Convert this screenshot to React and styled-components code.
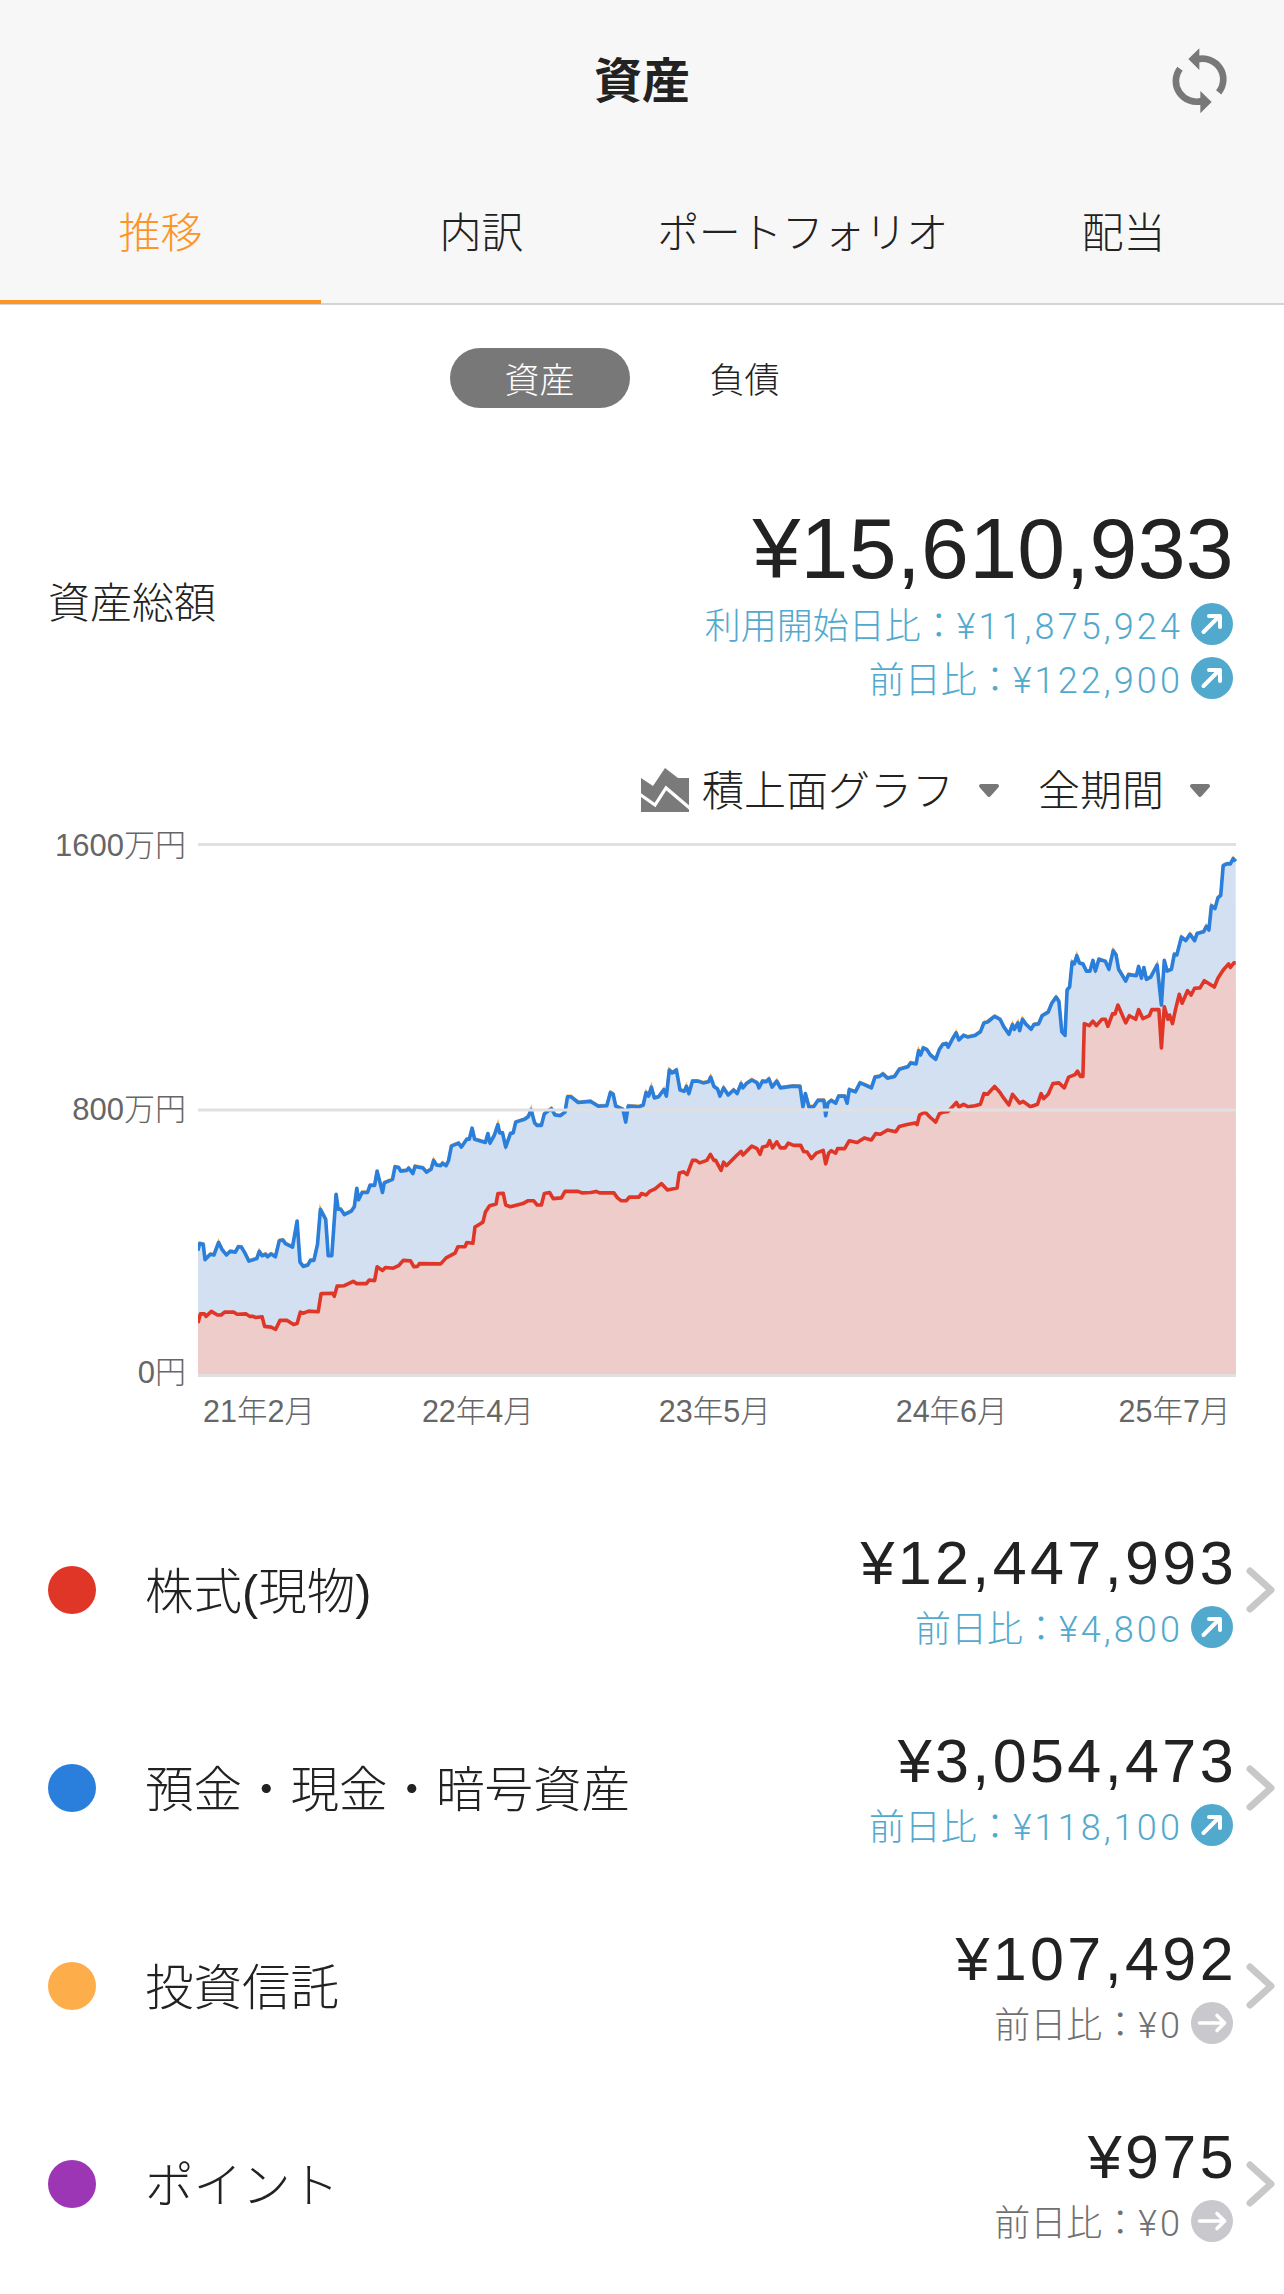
import React from "react";
import styled, { createGlobalStyle } from "styled-components";

const GlobalStyle = createGlobalStyle`
    html, body {
        margin: 0;
        padding: 0;
        background: #fff;
    }
    body {
        font-family: "Liberation Sans", "Noto Sans CJK JP", sans-serif;
        color: #222;
    }
`

const Page = styled.div`
    width: 1284px;
    min-height: 2294px;
    background: #fff;
`
const Header = styled.header`
    background: #f7f7f7;
    border-bottom: 2px solid #d4d4d8;
    height: 303px;
`
const TitleBar = styled.div`
    height: 160px;
    display: grid;
    grid-template-columns: 1fr auto 1fr;
    align-items: center;
`
const Title = styled.h1`
    grid-column: 2;
    margin: 0;
    padding-top: 3px;
    font-size: 48px;
    font-weight: 700;
    line-height: 1;
`
const RefreshIcon = styled.svg`
    grid-column: 3;
    justify-self: end;
    width: 80px;
    height: 90px;
    margin-right: 44px;
`
const Tabs = styled.nav`
    display: grid;
    grid-template-columns: repeat(4, 321px);
    height: 144px;
`
const Tab = styled.div`
    display: flex;
    align-items: center;
    justify-content: center;
    padding-bottom: 2px;
    font-size: 42px;
    font-weight: 300;
    letter-spacing: ${p => (p.$tight ? "-0.5px" : "0")};
    color: ${p => (p.$active ? "#fd9426" : "#222")};
    border-bottom: 4px solid ${p => (p.$active ? "#fd9426" : "transparent")};
    height: 144px;
    box-sizing: border-box;
`
const Toggle = styled.div`
    display: flex;
    justify-content: center;
    gap: 25px;
    margin-top: 43px;
`
const ToggleItem = styled.div`
    width: 180px;
    height: 60px;
    padding-bottom: 1px;
    box-sizing: border-box;
    border-radius: 30px;
    display: flex;
    align-items: center;
    justify-content: center;
    font-size: 35px;
    font-weight: 300;
    background: ${p => (p.$active ? "#787878" : "transparent")};
    color: ${p => (p.$active ? "#fff" : "#222")};
`
const Summary = styled.section`
    display: flex;
    justify-content: space-between;
    align-items: center;
    margin-top: 91px;
    padding: 0 50px 0 48px;
`
const SummaryLabel = styled.div`
    font-size: 42px;
    font-weight: 300;
    padding-bottom: 6px;
`
const Amounts = styled.div`
    display: flex;
    flex-direction: column;
    align-items: flex-end;
`
const TotalValue = styled.div`
    font-size: 86px;
    line-height: 98px;
    height: 98px;
    letter-spacing: 0.3px;
`
const DiffRow = styled.div`
    display: flex;
    align-items: center;
    justify-content: flex-end;
    height: 54px;
    gap: 8px;
    font-size: 36px;
    font-weight: 300;
    color: ${p => (p.$flat ? "#707070" : "#52a9ce")};
`
const DiffText = styled.span`
    padding-bottom: 2px;
`
const DiffMoney = styled.span`
    font-family: Roboto, "Liberation Sans", sans-serif;
    letter-spacing: 3.1px;
`
const DiffIcon = styled.svg`
    width: 42px;
    height: 42px;
    flex: none;
    margin-right: 1px;
`
const Controls = styled.div`
    display: flex;
    align-items: center;
    justify-content: flex-end;
    height: 60px;
    margin-top: 55px;
    padding-right: 73px;
    font-size: 42px;
    font-weight: 300;
`
const ControlText = styled.span`
    padding-bottom: 5px;
`
const AreaIcon = styled.svg`
    width: 50px;
    height: 46px;
    margin-right: 11px;
`
const Caret = styled.svg`
    width: 22px;
    height: 15px;
    margin-left: ${p => p.$before}px;
    margin-right: ${p => p.$after || 0}px;
`
const ChartRow = styled.div`
    display: grid;
    grid-template-columns: 186px 1042px;
    column-gap: 12px;
    margin-top: 10px;
    align-items: start;
`
const YAxis = styled.div`
    height: 558px;
    padding-top: 1px;
    box-sizing: border-box;
    display: flex;
    flex-direction: column;
    justify-content: space-between;
    align-items: flex-end;
`
const AxisLabel = styled.span`
    font-size: 31px;
    line-height: 30px;
    font-weight: 300;
    color: #666;
`
const XLabel = styled(AxisLabel)`
    font-size: 30.5px;
    margin-left: ${p => p.$offset}px;
`
const ChartSvg = styled.svg`
    width: 1042px;
    height: 550px;
    display: block;
`
const XAxis = styled.div`
    display: flex;
    height: 30px;
    margin-top: 8px;
`
const AssetList = styled.section`
    margin-top: 65px;
`
const AssetRow = styled.div`
    height: 198px;
    display: flex;
    align-items: center;
    padding-left: 48px;
`
const Dot = styled.span`
    width: 48px;
    height: 48px;
    border-radius: 50%;
    background: ${p => p.$color};
    flex: none;
`
const AssetName = styled.div`
    flex: 1;
    margin-left: 49px;
    padding-bottom: 5px;
    font-size: 48.5px;
    font-weight: 300;
`
const AssetValue = styled.div`
    font-size: 61px;
    line-height: 74px;
    height: 74px;
    letter-spacing: 3.4px;
    margin-right: -3px;
`
const Chevron = styled.svg`
    width: 32px;
    height: 46px;
    margin-left: 11px;
    margin-right: 7px;
    flex: none;
`

const blue3 = [[50,1178],[55,1158],[65,1160],[70,1203],[85,1188],[95,1190],[108,1155],[118,1175],[130,1190],[140,1180],[155,1182],[163,1167],[172,1168],[182,1185],[193,1207],[215,1200],[222,1180],[230,1192],[240,1188],[245,1195],[255,1187],[267,1195],[278,1150],[288,1148],[295,1158],[315,1168],[328,1095],[336,1210],[345,1222],[358,1218],[365,1205],[375,1205],[385,1160],[393,1062],[408,1090],[415,1192],[425,1192],[437,1020],[443,1062],[450,1062],[460,1077],[480,1067],[488,1055],[495,1003],[500,1035],[510,1015],[525,1015],[532,995],[545,995],[552,955],[567,1015],[572,988],[595,978],[602,943],[612,945],[618,955],[635,953],[640,947],[652,962],[658,942],[680,946],[690,958],[703,950],[710,925],[718,938],[730,940],[735,933],[745,940],[752,925],[760,885],[780,877],[788,888],[803,866],[810,866],[818,835],[825,866],[855,875],[862,850],[868,877],[880,855],[890,825],[895,848],[903,848],[912,888],[925,850],[933,848],[940,818],[965,810],[975,803],[983,783],[993,820],[1000,827],[1012,827],[1020,795],[1040,780],[1050,798],[1065,800],[1078,790],[1085,747],[1095,747],[1115,763],[1150,760],[1170,773],[1195,772],[1205,735],[1213,740],[1220,773],[1240,782],[1248,818],[1255,773],[1285,775],[1297,770],[1305,735],[1312,745],[1320,720],[1328,750],[1340,747],[1355,727],[1362,745],[1370,672],[1378,680],[1390,672],[1400,728],[1412,732],[1418,718],[1425,738],[1435,703],[1450,703],[1465,708],[1480,705],[1486,692],[1495,718],[1505,725],[1512,745],[1522,722],[1535,742],[1550,728],[1560,738]]
const blue4 = [[115,710],[120,722],[130,710],[145,700],[160,708],[165,722],[175,703],[185,705],[193,697],[202,720],[215,703],[225,722],[240,720],[260,717],[280,718],[288,775],[295,738],[305,775],[318,775],[330,757],[347,757],[352,800],[358,765],[368,757],[380,765],[388,745],[405,745],[412,765],[418,727],[435,733],[448,708],[460,713],[480,722],[490,692],[503,690],[512,683],[525,695],[545,690],[558,670],[582,663],[590,652],[605,655],[612,618],[618,630],[625,610],[635,615],[645,630],[660,642],[670,615],[680,600],[690,598],[695,608],[708,583],[717,568],[725,588],[738,575],[750,580],[770,575],[785,565],[795,540],[805,538],[812,532],[825,522],[840,530],[850,550],[865,572],[875,545],[880,558],[890,540],[895,562],[903,530],[912,543],[927,558],[935,545],[948,543],[958,520],[975,510],[985,485],[997,468],[1005,480],[1013,565],[1022,575],[1028,448],[1035,440],[1042,370],[1048,375],[1055,352],[1062,372],[1072,375],[1082,395],[1092,395],[1100,365],[1107,395],[1117,362],[1135,368],[1145,390],[1157,338],[1165,350],[1172,390],[1192,423],[1200,405],[1222,408],[1228,382],[1236,415],[1243,385],[1250,418],[1262,412],[1280,378],[1292,490],[1300,365],[1308,395],[1320,390],[1328,348],[1335,350],[1348,300],[1360,310],[1372,292],[1385,310],[1392,290],[1410,285],[1418,270],[1425,280],[1432,212],[1442,220],[1450,190],[1458,183],[1465,100],[1475,95],[1485,95],[1493,80],[1500,88]]
const red3 = [[50,1380],[57,1355],[68,1355],[73,1362],[88,1348],[105,1358],[115,1358],[125,1350],[150,1350],[160,1356],[185,1355],[195,1362],[205,1362],[212,1365],[230,1363],[237,1390],[255,1392],[268,1398],[280,1373],[300,1373],[318,1385],[328,1382],[337,1350],[345,1353],[360,1347],[387,1349],[395,1298],[428,1297],[432,1306],[440,1277],[460,1276],[485,1264],[495,1270],[522,1270],[530,1260],[545,1262],[552,1223],[567,1233],[575,1225],[597,1227],[612,1220],[625,1205],[645,1206],[655,1223],[665,1222],[670,1214],[730,1215],[745,1198],[770,1185],[778,1167],[798,1167],[803,1155],[820,1157],[826,1112],[840,1103],[848,1098],[855,1070],[867,1052],[885,1047],[890,1018],[905,1017],[912,1050],[925,1055],[960,1046],[975,1038],[990,1038],[1000,1050],[1012,1050],[1020,1018],[1035,1015],[1045,1032],[1068,1030],[1078,1012],[1115,1012],[1125,1016],[1150,1015],[1165,1012],[1175,1016],[1215,1016],[1225,1030],[1235,1038],[1250,1038],[1258,1028],[1285,1028],[1292,1018],[1305,1022],[1315,1012],[1330,1005],[1348,990],[1365,1008],[1392,1002],[1398,960],[1410,957],[1420,965],[1435,925],[1445,925],[1455,932],[1475,925],[1485,908],[1495,925],[1500,925],[1515,953],[1522,930],[1530,940],[1560,910]]
const red4 = [[115,900],[120,910],[130,900],[145,885],[160,892],[168,908],[175,888],[188,885],[195,870],[203,890],[215,873],[225,890],[238,890],[247,877],[262,883],[282,883],[290,900],[300,902],[312,920],[325,905],[345,897],[352,935],[360,905],[368,898],[380,905],[385,892],[405,892],[418,870],[440,875],[460,862],[480,868],[492,850],[505,852],[525,840],[548,845],[558,830],[580,825],[602,820],[608,825],[615,798],[630,790],[645,805],[660,818],[670,795],[680,790],[695,788],[718,763],[725,775],[738,768],[750,775],[770,772],[785,768],[795,738],[805,740],[825,718],[840,735],[850,750],[865,770],[875,740],[885,752],[895,765],[905,760],[925,775],[945,768],[955,738],[962,752],[975,740],[988,710],[1005,708],[1020,722],[1032,692],[1050,685],[1057,675],[1065,690],[1072,690],[1076,542],[1090,548],[1100,535],[1110,548],[1125,530],[1135,530],[1142,550],[1155,515],[1162,515],[1170,490],[1192,540],[1202,520],[1220,530],[1228,503],[1240,528],[1258,520],[1265,503],[1285,503],[1292,610],[1300,495],[1310,530],[1315,518],[1323,542],[1332,500],[1342,460],[1350,485],[1365,450],[1375,462],[1385,443],[1400,442],[1412,422],[1440,440],[1450,415],[1465,392],[1480,375],[1485,385],[1495,372],[1500,372]]

// sampled from the picture, 2.8 px per page px
const toPath = (left, right) => {
    const a = left.map(([x, y]) => [180 + x / 2.8, 830 + y / 2.8])
    const b = right.map(([x, y]) => [700 + x / 2.8, 830 + y / 2.8])
    return [...a, ...b].map(([x, y]) => `${x.toFixed(1)},${y.toFixed(1)}`).join(" L")
}
const bluePath = "M" + toPath(blue3, blue4)
const redPath = "M" + toPath(red3, red4)
const closeArea = " L1236,1375 L198,1375 Z"

const assets = [
    { name: "株式(現物)", color: "#e03627", value: "¥12,447,993", diff: "¥4,800", up: true },
    { name: "預金・現金・暗号資産", color: "#2a7fdc", value: "¥3,054,473", diff: "¥118,100", up: true },
    { name: "投資信託", color: "#fdae4b", value: "¥107,492", diff: "¥0", up: false },
    { name: "ポイント", color: "#9c36b5", value: "¥975", diff: "¥0", up: false },
]

const xLabels = [
    { text: "21年2月", offset: 203 },
    { text: "22年4月", offset: 107 },
    { text: "23年5月", offset: 125 },
    { text: "24年6月", offset: 125 },
    { text: "25年7月", offset: 111 },
]

function Diff({ label, money, up }) {
    return (
        <DiffRow $flat={!up}>
            <DiffText>
                {label}：<DiffMoney>{money}</DiffMoney>
            </DiffText>
            <DiffIcon viewBox="0 0 42 42">
                <circle cx="21" cy="21" r="21" fill={up ? "#52a9ce" : "#c8c8cd"} />
                {up ? (
                    <g fill="none" stroke="#fff" strokeWidth="4" strokeLinecap="round" strokeLinejoin="round">
                        <path d="M12.5 29 L28 13.5" />
                        <path d="M18 13 H29 V24" />
                    </g>
                ) : (
                    <g fill="none" stroke="#fff" strokeWidth="3.6" strokeLinecap="round" strokeLinejoin="round">
                        <path d="M8.5 21 H33.5" />
                        <path d="M26 13.5 L33.5 21 L26 28.5" />
                    </g>
                )}
            </DiffIcon>
        </DiffRow>
    )
}

function DownCaret({ before, after }) {
    return (
        <Caret $before={before} $after={after} viewBox="0 0 22 15">
            <path d="M3 3 H19 L11 12 Z" fill="#777" stroke="#777" strokeWidth="4" strokeLinejoin="round" />
        </Caret>
    )
}

export default function App() {
    return (
        <Page>
            <GlobalStyle />
            <Header>
                <TitleBar>
                    <Title>資産</Title>
                    <RefreshIcon viewBox="0 0 240 270">
                        <g fill="none" stroke="#787878" strokeWidth="20">
                            <path d="M112 73 A62 62 0 0 1 176 172" />
                            <path d="M60 101 A62 62 0 0 0 126 198" />
                        </g>
                        <path d="M85 72 L118 40 V105 Z M155 201 L121 168 V235 Z" fill="#787878" />
                    </RefreshIcon>
                </TitleBar>
                <Tabs>
                    <Tab $active>推移</Tab>
                    <Tab>内訳</Tab>
                    <Tab $tight>ポートフォリオ</Tab>
                    <Tab>配当</Tab>
                </Tabs>
            </Header>

            <Toggle>
                <ToggleItem $active>資産</ToggleItem>
                <ToggleItem>負債</ToggleItem>
            </Toggle>

            <Summary>
                <SummaryLabel>資産総額</SummaryLabel>
                <Amounts>
                    <TotalValue>¥15,610,933</TotalValue>
                    <Diff label="利用開始日比" money="¥11,875,924" up />
                    <Diff label="前日比" money="¥122,900" up />
                </Amounts>
            </Summary>

            <Controls>
                <AreaIcon viewBox="12 12 50 46">
                    <path d="M12 23 L24 31 L36 13 L49 23 H60 V57 H12 Z" fill="#7a7a7a" />
                    <path d="M9 38 L26 50 L37 33 L63 55" fill="none" stroke="#fff" strokeWidth="3.2" />
                </AreaIcon>
                <ControlText>積上面グラフ</ControlText>
                <DownCaret before={24} after={38} />
                <ControlText>全期間</ControlText>
                <DownCaret before={25} />
            </Controls>

            <ChartRow>
                <YAxis>
                    <AxisLabel>1600万円</AxisLabel>
                    <AxisLabel>800万円</AxisLabel>
                    <AxisLabel>0円</AxisLabel>
                </YAxis>
                <ChartSvg viewBox="198 830 1042 550">
                    <path d={bluePath + closeArea} fill="#d2e0f2" />
                    <path d={redPath + closeArea} fill="#eeccca" />
                    <path d={bluePath} fill="none" stroke="#fdae4b" strokeWidth="2.6" transform="translate(0 -0.9)" />
                    <path d={bluePath} fill="none" stroke="#2a7fdc" strokeWidth="3.6" strokeLinejoin="round" />
                    <path d={redPath} fill="none" stroke="#e03627" strokeWidth="3.6" strokeLinejoin="round" />
                    <g stroke="#e0e0e0" strokeWidth="3">
                        <path d="M198 844.5 H1236" />
                        <path d="M198 1110 H1236" />
                        <path d="M198 1375.5 H1236" />
                    </g>
                </ChartSvg>
            </ChartRow>
            <XAxis>
                {xLabels.map(l => (
                    <XLabel key={l.text} $offset={l.offset}>{l.text}</XLabel>
                ))}
            </XAxis>

            <AssetList>
                {assets.map(a => (
                    <AssetRow key={a.name}>
                        <Dot $color={a.color} />
                        <AssetName>{a.name}</AssetName>
                        <Amounts>
                            <AssetValue>{a.value}</AssetValue>
                            <Diff label="前日比" money={a.diff} up={a.up} />
                        </Amounts>
                        <Chevron viewBox="0 0 32 46">
                            <path d="M5 4 L26 23 L5 42" fill="none" stroke="#c8c8c8" strokeWidth="7" strokeLinecap="round" strokeLinejoin="round" />
                        </Chevron>
                    </AssetRow>
                ))}
            </AssetList>
        </Page>
    )
}
